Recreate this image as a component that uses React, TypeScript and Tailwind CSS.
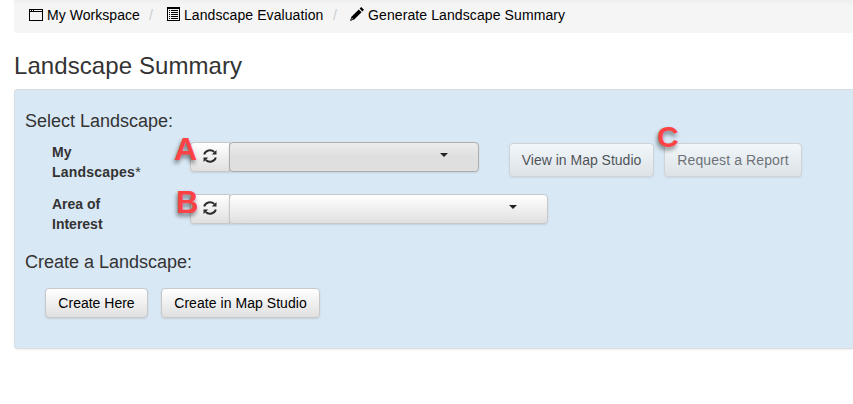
import type { ReactNode } from "react";

const raised =
  "border border-[#c8c8c8] bg-linear-to-b from-white to-[#e0e0e0] shadow-[0_1px_2px_rgba(0,0,0,0.1)]";

function WindowIcon() {
  return (
    <svg className="mr-1 mt-[9px] h-3 w-3.5 shrink-0" viewBox="0 0 14 12" shapeRendering="crispEdges">
      <path fill="#000" fillRule="evenodd" d="M0 0h14v12H0zM1 3v8h12V3zM1 1v1h1V1zM3 1v1h1V1zM5 1v1h8V1z" />
    </svg>
  );
}

function ListIcon() {
  return (
    <svg className="mr-1 mt-[7px] h-3.5 w-[13px] shrink-0" viewBox="0 0 13 14" shapeRendering="crispEdges">
      <path fill="#000" fillRule="evenodd" d="M0 0h13v14H0zM1 2v11h11V2z" />
      <path fill="#000" d="M2 3h1v1H2zM4 3h7v1H4zM2 5h1v1H2zM4 5h7v1H4zM2 7h1v1H2zM4 7h7v1H4zM2 9h1v1H2zM4 9h7v1H4zM2 11h1v1H2zM4 11h7v1H4z" />
    </svg>
  );
}

function PencilIcon() {
  return (
    <svg className="mr-1 mt-[7px] h-3.5 w-3.5 shrink-0" viewBox="0 0 14 14">
      <path fill="#000" d="M0 14l1.400-4.200L8.800 2.400l2.800 2.800-7.400 7.400zM9.600 1.600L11.200 0 14 2.800l-1.600 1.600z" />
      <path fill="#f5f5f5" d="M1.300 12.700l.6-1.700 1.100 1.100z" />
    </svg>
  );
}

function RefreshIcon() {
  return (
    <svg className="h-[14px] w-[14px]" viewBox="0 0 14 14">
      <g fill="none" stroke="#2b2b2b" strokeWidth="1.9">
        <path d="M1.200 5.500C2.200 1.300 8 -0.100 11.300 3" />
        <path d="M12.800 8.500C11.800 12.700 6 14.100 2.700 11" />
      </g>
      <path fill="#2b2b2b" d="M13.500 1V5.600H8.800zM0.500 13V8.400H5.200z" />
    </svg>
  );
}

function Caret() {
  return (
    <svg className="h-1 w-2" viewBox="0 0 8 4">
      <path fill="#222" d="M0 0h8L4 4z" />
    </svg>
  );
}

function Marker({ letter, place }: { letter: string; place: string }) {
  return (
    <span
      className={`absolute z-10 leading-8 font-bold text-[#fc4245] [text-shadow:-1px_3px_4px_rgba(0,0,0,0.5)] ${place}`}
    >
      {letter}
    </span>
  );
}

function RefreshButton() {
  return (
    <button className={`flex h-[30px] w-10 items-center rounded-l pb-0.5 pl-3 ${raised}`}>
      <RefreshIcon />
    </button>
  );
}

function Label({ children }: { children: ReactNode }) {
  return (
    <div className="w-[138px] shrink-0 pr-12 leading-5 font-bold">
      {children}
    </div>
  );
}

export default function App() {
  return (
    <div className="h-[404px] overflow-hidden bg-white pl-3.5 font-['Liberation_Sans',Arial,sans-serif] text-sm text-[#333]">
      <nav className="flex h-[33px] rounded-bl bg-linear-to-b from-[#efefef] to-[#f5f5f5] to-[5px] pl-[15px] leading-[30px] text-black">
        <WindowIcon />
        <span className="w-[93px] tracking-[0.05px]">My Workspace</span>
        <span className="w-[27px] pl-[9px] text-[#ccc]">/</span>
        <ListIcon />
        <span className="w-[140px] tracking-[0.08px]">Landscape Evaluation</span>
        <span className="w-[26px] pl-[9px] text-[#ccc]">/</span>
        <PencilIcon />
        <span className="tracking-[0.1px]">Generate Landscape Summary</span>
      </nav>

      <h1 className="mt-[18px] mb-2 text-2xl leading-[30px] tracking-[0.08px]">Landscape Summary</h1>

      <main className="h-[260px] rounded-l border border-r-0 border-[#d8dde1] bg-[#d9e8f5] pl-2.5 shadow-[0_1px_2px_rgba(0,0,0,0.06)]">
        <h2 className="pt-[21px] text-lg leading-5">Select Landscape:</h2>
        <div className="mt-[11px] flex h-[52px] pl-[27px]">
          <Label>
            My <span className="tracking-[0.22px]">Landscapes</span>
            <span className="font-normal">*</span>
          </Label>
          <div className="relative flex h-[30px]">
            <Marker letter="A" place="-left-4 -top-[9px] text-[32px]" />
            <RefreshButton />
            <button className="-ml-px flex h-[30px] w-[250px] justify-end rounded border border-[#adadad] bg-linear-to-b from-[#ececec] to-[#dfdfdf] to-50% pt-2.5 pr-[30px] shadow-[0_1px_2px_rgba(0,0,0,0.1)]">
              <Caret />
            </button>
          </div>
          <div className="relative mt-px ml-[30px] flex h-[34px] gap-2.5">
            <button className={`w-[145px] rounded text-black opacity-65 ${raised}`}>View in Map Studio</button>
            <button className={`w-[138px] rounded tracking-[0.1px] text-[#333] opacity-65 ${raised}`}>Request a Report</button>
            <Marker letter="C" place="left-[148px] -top-[22px] text-[30px]" />
          </div>
        </div>
        <div className="flex h-[58px] pl-[27px]">
          <Label>Area of Interest</Label>
          <div className="relative flex h-[30px]">
            <Marker letter="B" place="-left-3.5 -top-[7px] text-[31px]" />
            <RefreshButton />
            <button className={`-ml-px flex h-[30px] w-[319px] justify-end rounded pt-2.5 pr-[30px] ${raised}`}>
              <Caret />
            </button>
          </div>
        </div>
        <h2 className="text-lg leading-5">Create a Landscape:</h2>
        <div className="mt-4 flex gap-[13px] pl-5 text-black">
          <button className={`h-[30px] w-[103px] rounded ${raised}`}>Create Here</button>
          <button className={`h-[30px] w-[159px] rounded tracking-[0.05px] ${raised}`}>Create in Map Studio</button>
        </div>
      </main>
    </div>
  );
}
